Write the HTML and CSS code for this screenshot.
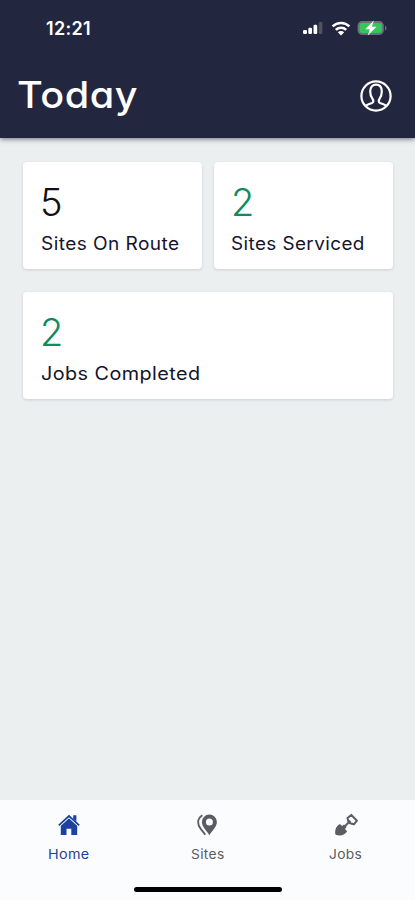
FILE: index.html
```html
<!DOCTYPE html>
<html lang="en">
<head>
<meta charset="utf-8">
<title>Today</title>
<link rel="stylesheet" href="styles.css">
</head>
<body>
<div class="app">
  <header class="header">
    <div class="status">
      <span class="time">12:21</span>
      <div class="indicators">
        <svg width="23" height="14" viewBox="0 0 23 14">
          <g fill="#fff"><rect x="1" y="9" width="4" height="4" rx="1.3"/><rect x="6.3" y="6.7" width="3.7" height="6.3" rx="1.2"/><rect x="11.5" y="3.8" width="3.7" height="9.2" rx="1.2"/></g>
          <rect x="16.7" y="1" width="3.7" height="12" rx="1.2" fill="#50525f"/>
        </svg>
        <svg width="20" height="15" viewBox="0 0 20 15">
          <g fill="none" stroke="#fff" stroke-width="2.5"><path d="M1.6 5.4a12 12 0 0 1 16.8 0"/><path d="M4.8 8.8a7.4 7.4 0 0 1 10.4 0"/></g>
          <path d="M10 14.5 6.8 11.2a4.6 4.6 0 0 1 6.4 0z" fill="#fff"/>
        </svg>
        <svg class="battery" width="31" height="16" viewBox="0 0 31 16">
          <rect x=".6" y="1.1" width="26.2" height="13.8" rx="4.4" fill="#6b6f7b"/>
          <rect x="2.6" y="3" width="22.2" height="10" rx="2.4" fill="#35c759"/>
          <path d="M28 5.4c2 .8 2 4.4 0 5.2z" fill="#6b6f7b"/>
          <path d="M16.8.6 8.200 9.200h4.500l-1.900 6.200L19.500 6.800h-4.600z" fill="#fff"/>
        </svg>
      </div>
    </div>
    <div class="title-row">
      <h1 class="title">Today</h1>
      <svg class="profile" width="34" height="34" viewBox="0 0 34 34" fill="none" stroke="#fff" stroke-width="2.2">
        <circle cx="17" cy="17" r="14.6"/>
        <path d="M6.400 27c2.200-2 5.100-2.100 6.800-3.100 1.500-1 1.200-2.800.2-4.300-1.500-2-2.200-4.200-2.200-7 0-4.400 2.300-6.900 5.800-6.900s5.800 2.500 5.800 6.900c0 2.800-.7 5-2.200 7-1 1.500-1.300 3.300.2 4.300 1.700 1 4.600 1.100 6.800 3.100"/>
      </svg>
    </div>
  </header>
  <main class="stats">
    <section class="card"><div class="value">5</div><div class="label">Sites On Route</div></section>
    <section class="card"><div class="value done">2</div><div class="label serviced">Sites Serviced</div></section>
    <section class="card wide"><div class="value done">2</div><div class="label completed">Jobs Completed</div></section>
  </main>
  <footer class="footer">
    <nav class="tabs">
      <a class="tab active">
        <svg width="24" height="24" viewBox="0 0 24 24" fill="currentColor">
          <path d="M12 5.100 3.800 12.400V22h5.700v-6.200h4.800V22h5.900v-9.600z"/>
          <path d="M1.800 12.300 12 3l10.200 9.300" fill="none" stroke="currentColor" stroke-width="1.8"/>
          <path d="M16.200 2.300h3.200v6.300l-3.200-2.800z"/>
          <path d="M3.100 13 12 5l8.900 8" fill="none" stroke="#fafcfe" stroke-width=".7"/>
        </svg>
        <span class="tab-name home">Home</span>
      </a>
      <a class="tab">
        <svg width="24" height="24" viewBox="0 0 24 24">
          <path fill="currentColor" fill-rule="evenodd" d="M14.400 1.500a7.500 7.500 0 0 1 7.500 7.500c0 4.800-5 9-7.500 13.200C11.900 18 6.900 13.800 6.900 9a7.500 7.500 0 0 1 7.500-7.500zm0 4a3.500 3.500 0 1 0 0 7 3.500 3.500 0 0 0 0-7z"/>
          <path d="M7.400 2.200C2 5.700 1.900 11.300 5.900 16.100c1.800 2.200 3.100 3.800 4.300 5.600" fill="none" stroke="currentColor" stroke-width="1.8"/>
        </svg>
        <span class="tab-name">Sites</span>
      </a>
      <a class="tab">
        <svg width="24" height="24" viewBox="0 0 24 24">
          <path fill="currentColor" d="M1.400 21.400c-.7-3.300.1-6.700 2.400-8.900l2.100-1.500 2.200 2.100L10 11.500l2.600 2.600-1.700 1.800 2.200 2.300c-2 3.500-7 5.700-11.700 3.200z"/>
          <path d="m8.200 15.900 8.200-8.200" stroke="currentColor" stroke-width="2"/>
          <path d="m13.500 5 3.800-3.100 5.600 5.800-3 3.600-3.800-1-1.700-1.800z" fill="none" stroke="currentColor" stroke-width="2" stroke-linejoin="round"/>
        </svg>
        <span class="tab-name">Jobs</span>
      </a>
    </nav>
    <div class="home-bar"></div>
  </footer>
</div>
</body>
</html>
```
FILE: styles.css
```css
* { box-sizing: border-box; }
body {
  margin: 0;
  font-family: Inter, "Open Sans", sans-serif;
  font-feature-settings: "cv11";
  background: #ebeff0;
}
.app { height: 900px; display: flex; flex-direction: column; overflow: hidden; }
.header {
  height: 138px;
  flex: none;
  background: #23263f;
  color: #fff;
  box-shadow: 0 1px 5px rgba(20, 24, 50, .6);
}
.status {
  height: 56px;
  padding: 0 27px 0 46px;
  display: flex;
  align-items: center;
  justify-content: space-between;
}
.time { font-size: 18px; font-weight: 600; letter-spacing: .3px; }
.indicators { display: flex; align-items: center; gap: 6px; }
.title-row {
  height: 80px;
  padding: 0 22px 0 17px;
  display: flex;
  align-items: center;
  justify-content: space-between;
}
.title {
  margin: -2px 0 0;
  font-size: 37px;
  line-height: 44px;
  font-weight: 500;
  letter-spacing: .5px;
  transform: scaleX(1.07);
  transform-origin: left;
}
.stats {
  flex: 1;
  padding: 24px 23px;
  display: grid;
  grid-template-columns: 179px 179px;
  grid-auto-rows: 107px;
  column-gap: 12px;
  row-gap: 23px;
}
.card {
  padding: 18px 18px 0;
  border-radius: 4px;
  background: #fff;
  box-shadow: 0 1px 3px rgba(40, 50, 60, .16);
}
.wide { grid-column: 1 / 3; }
.value { margin-left: -1px; font-size: 38px; line-height: 44px; font-weight: 300; color: #111; }
.done { color: #108b5b; }
.label {
  margin-top: 7px;
  font-size: 18px;
  line-height: 25px;
  color: #14142b;
  letter-spacing: .4px;
  white-space: nowrap;
  transform: scaleX(1.06);
  transform-origin: left;
}
.serviced { margin-left: -1px; transform: scaleX(1.048); }
.completed { transform: scaleX(1.1); }
.footer { height: 100px; flex: none; background: #fafcfe; display: flex; flex-direction: column; align-items: center; }
.tabs { width: 100%; height: 87px; display: grid; grid-template-columns: repeat(3, 1fr); }
.tab { display: flex; flex-direction: column; align-items: center; padding-top: 13px; color: #5a5c61; }
.active { color: #1c419f; }
.tab-name { margin-top: 8px; font-size: 13px; line-height: 18px; letter-spacing: .3px; transform: scaleX(1.06); }
.home { transform: scaleX(1.1); }
.home-bar { width: 148px; height: 5px; border-radius: 3px; background: #000; }
```
